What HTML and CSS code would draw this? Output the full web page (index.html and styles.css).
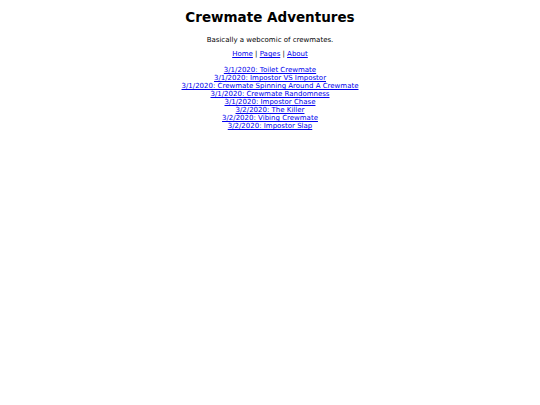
FILE: index.html
```html
<!DOCTYPE html>
<html>
<head>
<meta charset="utf-8">
<link rel="stylesheet" href="styles.css">
</head>
<body>
<div class="page">
  <h1 class="title">Crewmate Adventures</h1>
  <p class="tagline">Basically a webcomic of crewmates.</p>
  <p class="nav"><a href="#">Home</a> | <a href="#">Pages</a> | <a href="#">About</a></p>
  <ul class="posts">
    <li><a href="#">3/1/2020: Toilet Crewmate</a></li>
    <li><a href="#">3/1/2020: Impostor VS Impostor</a></li>
    <li><a href="#">3/1/2020: Crewmate Spinning Around A Crewmate</a></li>
    <li><a href="#">3/1/2020: Crewmate Randomness</a></li>
    <li><a href="#">3/1/2020: Impostor Chase</a></li>
    <li><a href="#">3/2/2020: The Killer</a></li>
    <li><a href="#">3/2/2020: Vibing Crewmate</a></li>
    <li><a href="#">3/2/2020: Impostor Slap</a></li>
  </ul>
</div>
</body>
</html>
```
FILE: styles.css
```css
html, body {
  margin: 0;
  padding: 0;
  background: #fff;
}
body {
  font-family: "DejaVu Sans", Verdana, sans-serif;
  font-size: 7px;
  color: #000;
}
.page {
  text-align: center;
  padding-top: 8px;
}
.title {
  font-size: 13.5px;
  font-weight: bold;
  margin: 0;
  line-height: 18px;
}
.tagline {
  margin: 10px 0 0;
  line-height: 8px;
}
.nav {
  margin: 6px 0 0;
  line-height: 8px;
}
a {
  color: #00e;
}
.posts {
  list-style: none;
  margin: 8px 0 0;
  padding: 0;
}
.posts li {
  line-height: 8px;
}
```
